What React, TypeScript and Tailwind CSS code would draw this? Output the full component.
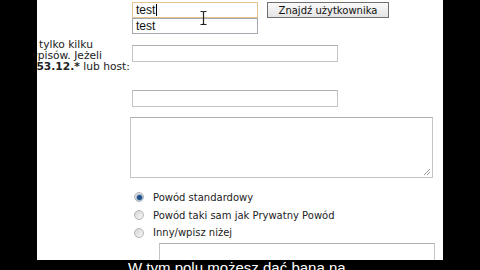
import React from "react";

const sans = { fontFamily: '"DejaVu Sans", Verdana, sans-serif' };
const arial = { fontFamily: '"Liberation Sans", Arial, sans-serif' };

function Radio({ checked }: { checked?: boolean }) {
  return (
    <div className="w-[10px] h-[10px] rounded-full border border-[#b4b4b4] bg-gradient-to-br from-[#d4d4d4] to-[#f8f8f8] flex items-center justify-center shrink-0">
      {checked && <div className="w-[5px] h-[5px] rounded-full bg-[#1d4f86] ring-1 ring-[#9fb8d4]" />}
    </div>
  );
}

function Grip() {
  return (
    <svg width="9" height="9" viewBox="0 0 9 9" className="absolute right-[1px] bottom-[1px]">
      <path d="M8 2 L2 8 M8 5 L5 8" stroke="#9a9a9a" strokeWidth="1" />
    </svg>
  );
}

export default function App() {
  return (
    <div className="w-[480px] h-[270px] bg-black overflow-hidden flex flex-col">
      <div className="flex h-[260px] shrink-0">
        <div className="w-[37px] shrink-0 bg-black" />
        <div className="w-[406px] shrink-0 bg-white relative overflow-hidden text-[10px] text-[#222]" style={sans}>
          {/* Row 1 */}
          <div className="flex mt-[2px] h-[16px]">
            <div className="ml-[95px] w-[126px] h-[16px] relative shrink-0">
              <div className="w-full h-full border border-[#e2c28e] bg-white flex items-center pl-[3px] text-[12px] text-[#111]" style={arial}>
                <span>test</span>
                <span className="w-px h-[12px] bg-black ml-[1px]" />
              </div>
              <div className="absolute left-0 top-[16px] w-[126px] h-[16px] border border-[#a8a8b0] bg-white flex items-center pl-[3px] text-[12px] text-[#111] z-10" style={arial}>
                test
              </div>
              <svg width="9" height="16" viewBox="0 0 9 16" className="absolute left-[67px] top-[8px] z-20">
                <path d="M1.5 1.5 H3.5 Q4.5 1.5 4.5 3 V13 Q4.5 14.5 3.5 14.5 H1.5 M7.5 1.5 H5.5 Q4.5 1.5 4.5 3 M4.5 13 Q4.5 14.5 5.5 14.5 H7.5" stroke="#222" strokeWidth="1.2" fill="none" />
              </svg>
            </div>
            <div className="ml-[9px] w-[122px] h-[16px] shrink-0 border border-[#6f6f6f] bg-gradient-to-b from-[#fafafa] to-[#e4e4e4] flex items-center justify-center text-[10px] text-[#111]">
              Znajdź użytkownika
            </div>
          </div>

          {/* Row 2 */}
          <div className="flex mt-[21px]">
            <div className="w-[95px] shrink-0 leading-[11px] whitespace-nowrap text-[10.7px]">
              <div className="ml-[-8px]">
                <div>
                  <span className="invisible">o </span>tylko kilku
                </div>
                <div>wpisów. Jeżeli</div>
                <div>
                  <span className="font-bold">153.12.*</span> lub host:
                </div>
              </div>
            </div>
            <div className="mt-[6px] w-[206px] h-[17px] border border-[#c4c4c4] border-t-[#b0b0b0] bg-white" />
          </div>

          {/* Row 3 */}
          <div className="mt-[18px] ml-[95px] w-[206px] h-[17px] border border-[#c4c4c4] border-t-[#b0b0b0] bg-white" />

          {/* Textarea */}
          <div className="mt-[10px] ml-[93px] w-[303px] h-[61px] border border-[#c4c4c4] border-t-[#b0b0b0] bg-white relative">
            <Grip />
          </div>

          {/* Radios */}
          <div className="mt-[10px] flex flex-col">
            <div className="h-[18px] flex items-center ml-[97px]">
              <Radio checked />
              <span className="ml-[9px]">Powód standardowy</span>
            </div>
            <div className="h-[18px] flex items-center ml-[97px]">
              <Radio />
              <span className="ml-[9px]">Powód taki sam jak Prywatny Powód</span>
            </div>
            <div className="h-[17px] flex items-center ml-[97px]">
              <Radio />
              <span className="ml-[9px]">Inny/wpisz niżej</span>
            </div>
          </div>

          <div className="mt-[2px] ml-[122px] w-[276px] h-[30px] border border-[#c4c4c4] border-t-[#b0b0b0] bg-white" />
        </div>
        <div className="flex-1 bg-black" />
      </div>
      <div className="h-[10px] shrink-0 bg-black overflow-hidden pl-[128px]">
        <div className="text-[15px] leading-[15px] text-white whitespace-nowrap" style={arial}>
          W tym polu możesz dać bana na
        </div>
      </div>
    </div>
  );
}
